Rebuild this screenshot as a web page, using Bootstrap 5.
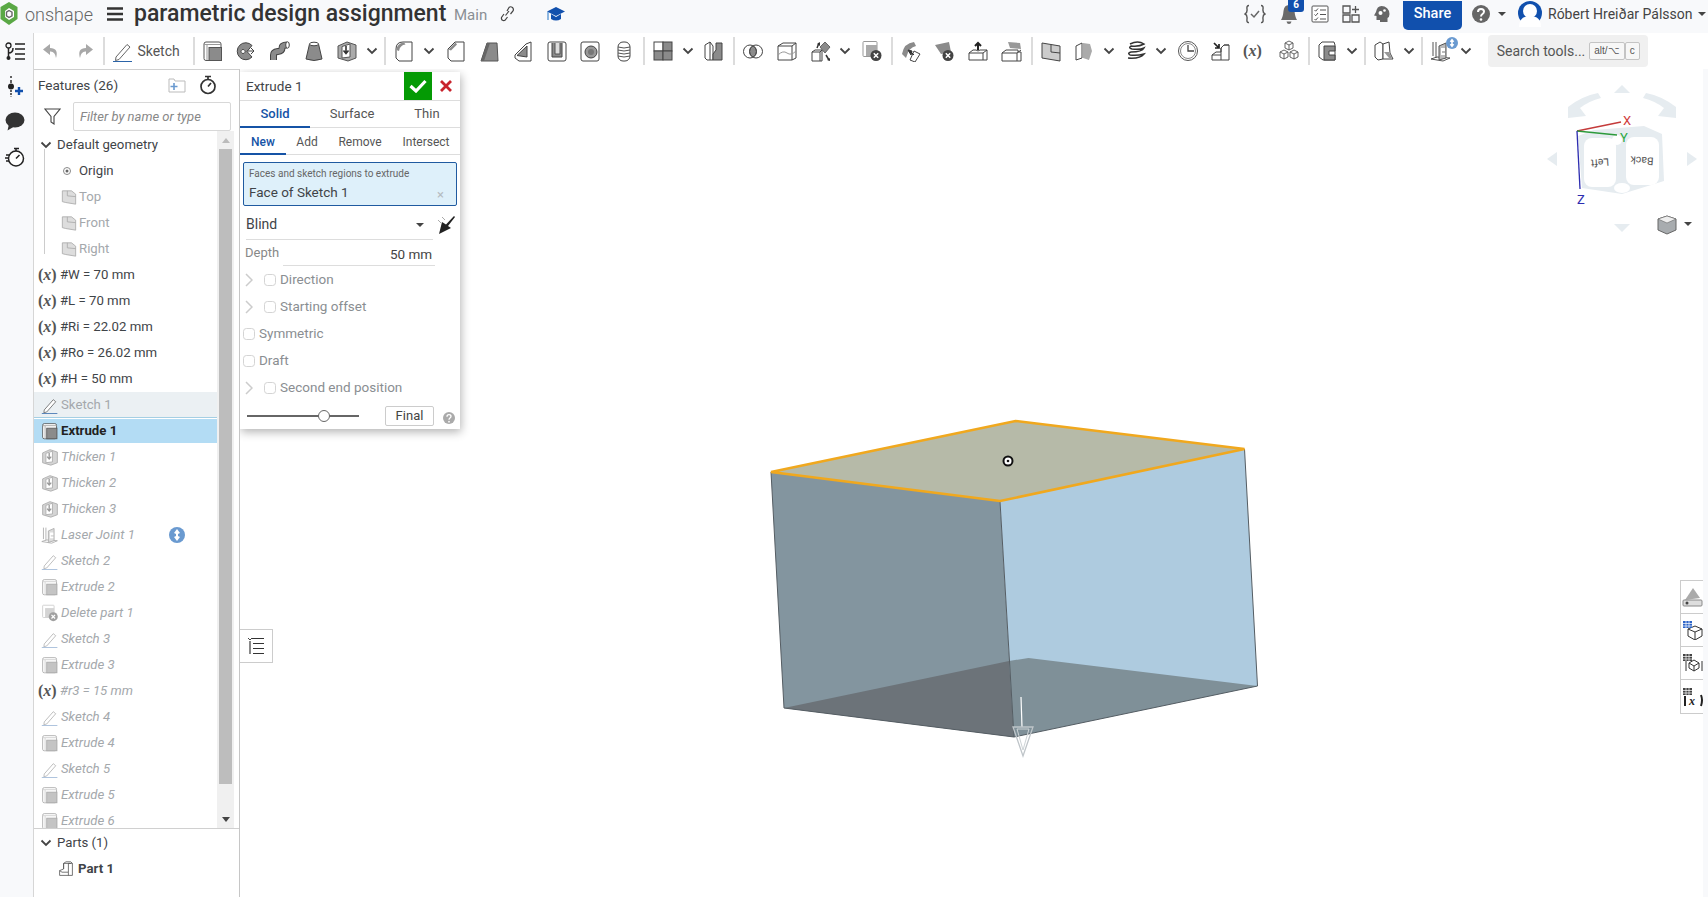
<!DOCTYPE html>
<html lang="en">
<head>
<meta charset="UTF-8" />
<meta name="viewport" content="width=device-width, initial-scale=1.0"/>
<title>parametric design assignment</title>
<link href="https://cdn.jsdelivr.net/npm/bootstrap@5.3.3/dist/css/bootstrap.min.css" rel="stylesheet"/>
<style>
  html, body { height: 100%; overflow: hidden; }
  body { font-family: Roboto, "Liberation Sans", sans-serif; font-size: 13.5px; color: #3f4448; background: #fff; }
  svg { display: block; flex: none; }

  /* top bar */
  .topbar { height: 33px; background: #f8f9fb; flex: none; padding-bottom: 5px; }
  .brand-name { font-size: 18px; font-weight: 300; color: #666; margin-left: 6px; width: 74px; }
  .doc-title { font-size: 23px; font-weight: 500; color: #333; margin-left: 11px; width: 320px; white-space: nowrap; }
  .doc-branch { font-size: 15px; color: #8a8f94; width: 45px; padding-top: 3px; }
  .link-cap { margin-left: 32px; }
  .top-right { margin-left: auto; }
  .top-gap { margin-left: 12px; }
  .top-gap-wide { margin-left: 13px; }
  .help-gap { margin-left: 10px; }
  .share-btn { background: #1150ad; border: 0; color: #fff; font-size: 14.5px; font-weight: 500; width: 59px; height: 29px; padding: 0 0 3px; margin: 0 0 -5px 13px; align-self: flex-start; border-radius: 0 0 5px 5px; }
  .share-btn:hover { background: #1150ad; color: #fff; }
  .notif { position: relative; margin-left: 14px; }
  .notif-count { position: absolute; left: 8px; top: -7px; width: 16px; height: 15px; background: #1150ad; color: #fff; font-size: 10px; font-weight: 700; line-height: 15px; text-align: center; border-radius: 3px; padding: 0; }
  .user-name { font-size: 14px; color: #444; margin-left: 6px; width: 150px; white-space: nowrap; }
  .mini-caret { width: 0; height: 0; border-left: 4px solid transparent; border-right: 4px solid transparent; border-top: 4px solid #444; }
  .end-caret { margin-right: 2px; }

  /* left rail */
  .rail { width: 34px; flex: none; background: #f8f9fb; border-right: 1px solid #d6d6d6; padding: 1px 4px 0 0; }
  .rail-btn { height: 35px; }

  /* toolbar */
  .toolbar { height: 36px; flex: none; background: #fff; }
  .tb-btn { width: 33.7px; height: 36px; flex: none; }
  .tb-chev { width: 16px; margin-right: 2px; }
  .tb-sep { width: 2px; height: 28px; background: #dcdcdc; margin: 0 1px 0 2px; flex: none; }
  .tb-sketch { padding-left: 6px; padding-right: 11px; height: 36px; font-size: 14px; color: #555; }
  .tb-sketch span { margin-left: 3px; }
  .tb-var { font-size: 19px; width: auto; margin: 0; }
  .tool-search { margin-left: 12px; width: 160px; height: 32px; background: #f0f0f0; border-radius: 4px; padding-left: 9px; font-size: 14px; color: #555; white-space: nowrap; flex: none; }
  .tool-key { font-family: "Liberation Sans", sans-serif; font-size: 10px; border: 1px solid #c4c4c4; background: #f7f7f7; color: #555; height: 18px; line-height: 16px; padding: 0 4px; border-radius: 2px; }
  .tool-key-a { margin-left: 4px; }

  /* features panel */
  .features { width: 206px; flex: none; border-top: 1px solid #d0d0d0; border-right: 1px solid #c6c6c6; }
  .feat-head { height: 32px; padding: 0 0 2px 4px; font-size: 13.5px; flex: none; }
  .feat-folder { margin-left: 50px; }
  .feat-timer { margin-left: 13px; }
  .feat-filter { height: 29px; padding-left: 10px; flex: none; }
  .feat-input { margin-left: 12px; width: 158px; height: 29px; padding: 0 6px; font-size: 13px; font-style: italic; border-radius: 2px; border-color: #d8d8d8; }
  .feat-input::placeholder { color: #888; }
  .tree-wrap { height: 698px; flex: none; padding-right: 5px; border-bottom: 1px solid #d0d0d0; }
  .tree-list { overflow: hidden; flex-grow: 1; padding-top: 1px; }
  .tree-row { height: 26px; flex: none; padding-left: 6px; white-space: nowrap; font-size: 13.2px; }
  .tree-row .row-ico { width: 20px; margin-right: 1px; }
  .tree-chev { margin-right: 5px; }
  .tree-off { color: #a4a8ac; font-style: italic; }
  .tree-dim { color: #a4a8ac; }
  .tree-sel { background: #b3dcf4; color: #222; font-weight: 700; height: 24px; margin-bottom: 1px; margin-top: 1px; }
  .tree-prev { background: #ebf0f3; border-bottom: 1px solid #a5cfe3; padding-top: 1px; }
  .var-ico { font-family: "Liberation Serif", serif; font-weight: 700; font-size: 16px; color: #555; width: 20px; margin-right: 2px; margin-left: -2px; white-space: nowrap; font-style: normal; }
  .var-ico i { font-style: italic; }
  .tree-nested { padding-left: 25px; position: relative; }
  .tree-nested::before { content: ""; position: absolute; left: 10px; top: -9px; height: 105px; width: 1px; background: #ccc; }
  .tree-nested .row-ico { margin-right: 0; }
  .parts-head { margin-top: 1px; }
  .part-row { padding-left: 24px; }
  .part-row svg { margin-right: 4px; }
  .scroll-bar { width: 17px; flex: none; background: #f0f0f0; }
  .scroll-up { height: 18px; }
  .scroll-thumb { height: 635px; margin: 0 2px; background: #bdbdbd; flex: none; }
  .scroll-down { margin-top: auto; height: 18px; }
  .arrow-up { width: 0; height: 0; border-left: 4px solid transparent; border-right: 4px solid transparent; border-bottom: 5px solid #bbb; }
  .arrow-down { width: 0; height: 0; border-left: 4px solid transparent; border-right: 4px solid transparent; border-top: 5px solid #444; }
  .info-dot { margin-left: 34px; }

  /* canvas and things floating on it */
  .viewport { position: relative; flex-grow: 1; border-right: 5px solid #f8f9fb; overflow: hidden; }
  .scene { position: absolute; inset: 0; width: 100%; height: 100%; }
  .cube-label { font-family: Roboto, sans-serif; font-size: 10.5px; fill: #555; }
  .axis-label { font-family: Roboto, sans-serif; font-size: 13px; }

  .dialog { position: absolute; left: 0; top: 3px; width: 220px; height: 357px; border: 0; border-radius: 0; box-shadow: 1px 3px 9px rgba(0,0,0,.3); }
  .dlg-head { height: 29px; border-bottom: 1px solid #ddd; padding-left: 6px; font-size: 13.5px; flex: none; }
  .dlg-ok { width: 28px; height: 28px; background: #049a04; margin-left: auto; }
  .dlg-close { width: 28px; height: 28px; }
  .dlg-tabs { height: 27px; border-bottom: 1px solid #ddd; flex: none; }
  .dlg-tab { text-align: center; padding-top: 3px; font-size: 13px; color: #555; height: 27px; margin-bottom: -1px; }
  .dlg-tab.on { color: #1553a6; font-weight: 500; border-bottom: 2px solid #1553a6; }
  .dlg-mode { font-size: 12px; padding-top: 5px; }
  .dlg-w70 { width: 70px; } .dlg-w84 { width: 84px; } .dlg-w66 { width: 66px; }
  .dlg-new { width: 46px; } .dlg-add { width: 42px; } .dlg-rem { width: 64px; } .dlg-int { width: 68px; }
  .dlg-query { margin: 7px 3px 0; height: 44px; background: #def0fa; border: 1px solid #1f5aa0; border-radius: 2px; padding: 4px 5px 0; position: relative; flex: none; }
  .query-label { font-size: 10px; color: #666; line-height: 14px; }
  .query-value { font-size: 13.5px; line-height: 20px; margin-top: 1px; }
  .query-x { position: absolute; right: 12px; top: 22px; color: #b5bcc1; font-size: 13px; }
  .dlg-blind { height: 30px; margin-top: 4px; padding-left: 6px; font-size: 14px; flex: none; }
  .blind-field { width: 187px; height: 30px; border-bottom: 1px solid #ddd; padding-right: 9px; flex: none; }
  .dlg-depth { height: 26px; padding-left: 5px; color: #888; font-size: 13px; flex: none; }
  .depth-field { width: 152px; height: 26px; margin-left: 4px; border-bottom: 1px solid #ddd; text-align: right; padding-right: 3px; color: #444; font-size: 13.5px; padding-top: 4px; }
  .dlg-check { height: 27px; color: #8a8e92; padding-left: 5px; font-size: 13.5px; flex: none; }
  .dlg-plain { padding-left: 3px; }
  .dlg-check .form-check-input { width: 12px; height: 12px; margin: 0 4px 0 0; border-color: #d4d4d4; }
  .exp-arrow { margin-right: 11px; }
  .dlg-slider { height: 27px; padding-left: 7px; margin-top: 1px; flex: none; }
  .slider-track { position: relative; width: 112px; height: 2px; background: #666; flex: none; }
  .slider-knob { position: absolute; left: 71px; top: -5px; width: 12px; height: 12px; background: #fff; border: 1px solid #666; border-radius: 50%; }
  .final-btn { margin-left: 26px; width: 49px; height: 20px; padding: 0; line-height: 18px; font-size: 13px; color: #444; border: 1px solid #ccc; border-radius: 2px; background: #fff; }
  .help-dot { margin-left: 9px; margin-top: 5px; }

  .list-tab { position: absolute; left: -1px; top: 560px; width: 34px; height: 34px; background: #fff; border: 1px solid #ccc; border-left-color: #fff; }
  .side-tools { position: absolute; right: 0; top: 511px; width: 23px; background: #fff; border: 1px solid #ccc; border-right: 0; }
  .side-tool { height: 33px; border-bottom: 1px solid #ccc; padding-left: 1px; }
  .side-tool:last-child { border-bottom: 0; }
  .side-var { font-family: "Liberation Serif", serif; font-weight: 700; font-style: italic; font-size: 12px; fill: #222; }
</style>
</head>
<body>

<svg width="0" height="0" class="position-absolute">
  <defs>
    <symbol id="i-sketch" viewBox="0 0 22 22"><path d="M4 17 15 4.500l3 2.500L7 19.500 3.500 20.500z" fill="#fff" stroke="#666" stroke-width="1"/><path d="M1 21.500h19" stroke="#2c64a8" stroke-width="1"/></symbol>
    <symbol id="i-extrude" viewBox="0 0 22 22"><rect x="2" y="2" width="17" height="18.500" rx="2" fill="#fff" stroke="#555"/><path d="M2 4.500h17M5 5v15" stroke="#999" fill="none"/><rect x="7" y="7.500" width="12.500" height="13" fill="#8b8b8b" stroke="#555"/></symbol>
    <symbol id="i-revolve" viewBox="0 0 22 22"><path d="M17 5.500A8.500 8.500 0 1 0 17 17l-5-5.500z" fill="#8b8b8b" stroke="#444"/><path d="M8 9.500a2 2 0 1 0 .1 0M12 11h7M16 8l3 3-3 3" fill="#fff" stroke="#444"/></symbol>
    <symbol id="i-sweep" viewBox="0 0 22 22"><path d="M4.500 20V15C4.500 9 13 14 13 8 13 5.500 15 5 18 5" fill="none" stroke="#444" stroke-width="7"/><path d="M4.500 20V15C4.500 9 13 14 13 8 13 5.500 15 5 18 5" fill="none" stroke="#8b8b8b" stroke-width="5"/><ellipse cx="18.500" cy="5" rx="1.800" ry="3.200" fill="#fff" stroke="#444"/></symbol>
    <symbol id="i-loft" viewBox="0 0 22 22"><path d="M6.500 4 3 19q8 3 16 0L15.500 4z" fill="#8b8b8b" stroke="#444"/><ellipse cx="11" cy="4" rx="4.500" ry="1.800" fill="#fff" stroke="#444"/></symbol>
    <symbol id="i-thicken" viewBox="0 0 22 22"><path d="M2 6 11 2l9 3v13l-8 3-10-3z" fill="#aaa" stroke="#555"/><path d="M6 6.500 14 4v13l-8 1z" fill="#fff" stroke="#555"/><path d="M10 6v7M7.500 10.500 10 13.500l2.500-3" fill="none" stroke="#333" stroke-width="1.600"/></symbol>
    <symbol id="i-fillet" viewBox="0 0 22 22"><path d="M3 9Q3 2 10 2h9v19H6l-3-3z" fill="#fff" stroke="#444"/><path d="M3.500 10Q4 3 11 2.500l1.500 2Q7 5 6 11z" fill="#8b8b8b"/></symbol>
    <symbol id="i-chamfer" viewBox="0 0 22 22"><path d="M3 9l7-7h9v19H6l-3-3z" fill="#fff" stroke="#444"/><path d="M3.500 9.500l7-7 1.500 2-6 6z" fill="#8b8b8b"/></symbol>
    <symbol id="i-draft" viewBox="0 0 22 22"><path d="M9 3h10l1 18H3z" fill="#8b8b8b" stroke="#555"/><path d="M9 3h3L6 21H3z" fill="#666"/></symbol>
    <symbol id="i-rib" viewBox="0 0 22 22"><path d="M3 15 14 4l5-2v19H7l-4-3z" fill="#fff" stroke="#444"/><path d="M5 15.500 15 6v11z" fill="#8b8b8b" stroke="#444"/></symbol>
    <symbol id="i-shell" viewBox="0 0 22 22"><rect x="2" y="2" width="18" height="19" rx="2" fill="#fff" stroke="#444"/><path d="M6 3v14h10V3" fill="#8b8b8b" stroke="#444"/><path d="M9 3v11h5V3" fill="#ddd" stroke="#555"/></symbol>
    <symbol id="i-hole" viewBox="0 0 22 22"><rect x="2" y="2" width="18" height="19" rx="2" fill="#fff" stroke="#444"/><circle cx="12" cy="12" r="6" fill="#999" stroke="#444"/><circle cx="12" cy="12" r="3" fill="#777"/></symbol>
    <symbol id="i-thread" viewBox="0 0 22 22"><rect x="5" y="2" width="12" height="19" rx="5" fill="#fff" stroke="#444"/><path d="M5 7q6 2 12 0M5 10q6 2 12 0M5 13q6 2 12 0M5 16q6 2 12 0" fill="none" stroke="#555"/></symbol>
    <symbol id="i-grid" viewBox="0 0 22 22"><rect x="2" y="2" width="9" height="9" fill="#fff" stroke="#444"/><rect x="11" y="2" width="9" height="9" fill="#8b8b8b" stroke="#444"/><rect x="2" y="11" width="9" height="9" fill="#8b8b8b" stroke="#444"/><rect x="11" y="11" width="9" height="9" fill="#8b8b8b" stroke="#444"/></symbol>
    <symbol id="i-wrap" viewBox="0 0 22 22"><path d="M2 5l5-3 3 4v14H4L2 18z" fill="#fff" stroke="#444"/><path d="M7 2v18M10 14l3-4V3h6v17H10z" fill="#8b8b8b" stroke="#444"/></symbol>
    <symbol id="i-bool" viewBox="0 0 22 22"><circle cx="8" cy="11.500" r="6.500" fill="#fff" stroke="#444"/><circle cx="14" cy="11.500" r="6.500" fill="none" stroke="#444"/><path d="M11 5.800a6.500 6.500 0 0 1 0 11.400 6.500 6.500 0 0 1 0-11.400z" fill="#8b8b8b" stroke="#444"/></symbol>
    <symbol id="i-splitbox" viewBox="0 0 22 22"><path d="M2 6l5-3h13v15l-4 2H2z" fill="#fff" stroke="#444"/><path d="M2 6h14v14M16 6l4-3" fill="none" stroke="#444"/><path d="M2 15q5-5 9-2t9-2" fill="none" stroke="#999"/></symbol>
    <symbol id="i-transform" viewBox="0 0 22 22"><path d="M15 2l5 5-5 6-5-6z" fill="#8b8b8b" stroke="#666"/><path d="M2 12l3-2h7v11H2zM2 12h8v9M10 12l2-2" fill="#fff" stroke="#444"/><path d="M7 8l2-5M16 15l3 5" stroke="#333" stroke-width="1.500"/><path d="M7 4l3-2v4zM20 21l-3-1 3-2z" fill="#333"/></symbol>
    <symbol id="i-deletepart" viewBox="0 0 22 22"><rect x="2" y="1.500" width="14" height="15" rx="1" fill="#fff" stroke="#999"/><rect x="5" y="5" width="11" height="11" fill="#aaa"/><circle cx="15" cy="15.500" r="5.500" fill="#444"/><path d="M12.800 13.300l4.400 4.400M17.200 13.300l-4.400 4.400" stroke="#fff" stroke-width="1.500"/></symbol>
    <symbol id="i-moveface" viewBox="0 0 22 22"><path d="M2 14Q4 3 14 2l2 4Q9 7 6 18z" fill="#8b8b8b"/><path d="M10 20l4-9 6 3-5 8z" fill="#fff" stroke="#444"/><path d="M8 10l4 1-1 4zM11 12l3 3" fill="#333" stroke="#333"/></symbol>
    <symbol id="i-delface" viewBox="0 0 22 22"><path d="M1 5l14-3 2 10-10 2z" fill="#8b8b8b"/><circle cx="14" cy="15.500" r="5.500" fill="#444"/><path d="M11.800 13.300l4.400 4.400M16.200 13.300l-4.400 4.400" stroke="#fff" stroke-width="1.500"/></symbol>
    <symbol id="i-replace" viewBox="0 0 22 22"><path d="M2 13l4-3h3q2 2 4 0h7v10H2zM2 13h14v7M16 13l4-3" fill="#fff" stroke="#444"/><path d="M11 10V3M8 6l3-3 3 3" fill="none" stroke="#222" stroke-width="2"/></symbol>
    <symbol id="i-offset" viewBox="0 0 22 22"><path d="M7 2l12 1 1 6-11-1z" fill="#999"/><path d="M1 13l4-3h12v2l3 0v9H1zM1 13h15v8M16 13l4-3" fill="#fff" stroke="#444"/></symbol>
    <symbol id="i-plane" viewBox="0 0 22 22"><path d="M2 3l18 3v15L2 18z" fill="#ccc" stroke="#444"/><path d="M11 4.500V12l9 1" fill="none" stroke="#444"/></symbol>
    <symbol id="i-mate" viewBox="0 0 22 22"><path d="M3 6l6-3v15l-6 2z" fill="#fff" stroke="#444"/><path d="M10 3l7 1 2 7-3 9-6-2z" fill="#aaa"/></symbol>
    <symbol id="i-helix" viewBox="0 0 22 22"><path d="M5 4q8-4 14 0-5 3-13 2-3 2 1 3 8 1 12-1-2 4-13 4-4 1-1 3 7 1 14-1-4 5-16 4" fill="none" stroke="#333" stroke-width="1.500"/></symbol>
    <symbol id="i-clock" viewBox="0 0 22 22"><circle cx="11" cy="11" r="9.500" fill="#fff" stroke="#555"/><circle cx="11" cy="11" r="7.500" fill="none" stroke="#888"/><path d="M11 5v6h6" fill="none" stroke="#444" stroke-width="1.300"/></symbol>
    <symbol id="i-steps" viewBox="0 0 22 22"><path d="M2 15l4-3h5V8l3-3h5v15H2zM2 15h9V8M11 15v5M14 5l5 0" fill="#fff" stroke="#444"/><path d="M4 3l5 5M9 4v4H5" fill="none" stroke="#222" stroke-width="1.700"/></symbol>
    <symbol id="i-cubes" viewBox="0 0 22 22"><g fill="#fff" stroke="#555" stroke-width=".9"><path d="M11 1l4 2v5l-4 2-4-2V3z"/><path d="M7 3l4 2 4-2M11 5v5"/><path d="M6 10l4 2v5l-4 2-4-2v-5z"/><path d="M2 12l4 2 4-2M6 14v5"/><path d="M16 10l4 2v5l-4 2-4-2v-5z"/><path d="M12 12l4 2 4-2M16 14v5"/></g></symbol>
    <symbol id="i-sheet" viewBox="0 0 22 22"><path d="M3 5l3-3h12l1 3v15H7l-4-3z" fill="#fff" stroke="#444"/><path d="M8 6h11v5h-6v4h6v5H8z" fill="#8b8b8b" stroke="#444"/></symbol>
    <symbol id="i-book" viewBox="0 0 22 22"><path d="M2 5l5-3 3 2v15l-5 1-3-3z" fill="#fff" stroke="#444"/><path d="M10 4l6-2 1 11 3 6H10z" fill="#fff" stroke="#444"/><path d="M11 12l5 6h3l-3-6z" fill="#999"/></symbol>
    <symbol id="i-laser" viewBox="0 0 22 22"><path d="M6 2v16M3 2v14M1 19l6-2 13 1-7 3z" fill="none" stroke="#555"/><path d="M9 6l7-3v15l-7 2z" fill="#bbb" stroke="#555"/><path d="M11 8h4v3h-3v2h3v2h-4z" fill="#fff"/></symbol>
    <symbol id="i-planeref" viewBox="0 0 18 18"><path d="M1 1h11l5 4v12L5 15 1 14z" fill="#ddd" stroke="#aaa"/><path d="M7 1v6l10 1" fill="none" stroke="#aaa"/></symbol>
    <symbol id="i-part" viewBox="0 0 20 20"><path d="M7 3l3-2h6l2 2v15H2v-6l5-2zM2 12l3 2h8v4M13 14V3h5M7 10V3h9" fill="#fff" stroke="#555"/></symbol>
    <symbol id="i-chev" viewBox="0 0 12 8"><path d="M1.500 1.500 6 6l4.500-4.500" fill="none" stroke="#444" stroke-width="1.800"/></symbol>
    <symbol id="i-info" viewBox="0 0 16 16"><circle cx="8" cy="8" r="8" fill="#6a9ad0"/><path d="M8 2l3 4-2 1v2l2 1-3 4-3-4 2-1V7L5 6z" fill="#fff"/></symbol>
  </defs>
</svg>

<div class="d-flex flex-column vh-100">

  <!-- top bar -->
  <header class="topbar d-flex align-items-center">
    <svg width="19" height="28" viewBox="0 0 19 28"><path d="M9 2l8.500 5v12L9 25 .5 19V7z" fill="#5aa845"/><path d="M9 8l5 3v6l-5 3-4-3v-6z" fill="#fff"/><path d="M9 10.500l3 1.700v3.600L9 17.500l-2.500-1.700v-3.600z" fill="none" stroke="#666" stroke-width="1.400"/></svg>
    <span class="brand-name">onshape</span>
    <svg width="16" height="14" viewBox="0 0 16 14" class="ms-2"><path d="M0 1.500h16M0 7h16M0 12.500h16" stroke="#333" stroke-width="2.400"/></svg>
    <span class="doc-title">parametric design assignment</span>
    <span class="doc-branch">Main</span>
    <svg width="16" height="16" viewBox="0 0 16 16"><path d="M6.500 9.500 10 5M5 8 2.500 11.500Q2 14 4 14.500 6 15 7 13l1.500-2M8 5l2-3.500Q11.500 0 13.500 1.500 15 3 14 5l-2.500 3" fill="none" stroke="#444" stroke-width="1.200"/></svg>
    <svg width="18" height="17" viewBox="0 0 18 17" class="link-cap"><path d="M9 1l9 4.500L9 10 0 5.500z" fill="#1150ad"/><path d="M4 8v5q5 3 10 0V8l-5 3z" fill="#1150ad"/><path d="M1 6v8" stroke="#6aa0d8" stroke-width="1.500"/></svg>

    <div class="top-right d-flex align-items-center">
      <svg width="22" height="20" viewBox="0 0 22 20"><path d="M5 1.500Q2.500 1.500 3 5t-2 5q2.500 1 2 5t2 3.500M17 1.500q2.500 0 2 3.500t2 5q-2.500 1-2 5t-2 3.500" fill="none" stroke="#555" stroke-width="1.400"/><path d="M7 10l3 3 5-6" fill="none" stroke="#666" stroke-width="1.500"/></svg>
      <div class="notif">
        <svg width="18" height="20" viewBox="0 0 18 20"><path d="M9 1q5 0 5.500 6t2.500 9H1q2-3 2.500-9T9 1zM6.500 17.500h5Q11 20 9 20t-2.500-2.500z" fill="#6a6a6a"/></svg>
        <span class="badge notif-count">6</span>
      </div>
      <svg width="18" height="18" viewBox="0 0 18 18" class="top-gap-wide"><rect x="1" y="1" width="16" height="16" rx="1" fill="#fff" stroke="#555"/><path d="M3.500 5l1.200 1.200L7 3.500M3.500 9.500l1.200 1.200L7 8M3.500 14l1.200 1.200L7 12.500M9 5h6M9 9.500h6M9 14h6" fill="none" stroke="#555"/></svg>
      <svg width="18" height="18" viewBox="0 0 18 18" class="top-gap-wide"><path d="M1 1h7v7H1zM1 10h7v7H1zM10 10h7v7h-7zM13.500 1v7M10 4.500h7" fill="none" stroke="#555" stroke-width="1.300"/></svg>
      <svg width="17" height="17" viewBox="0 0 17 17" class="top-gap-wide"><path d="M8.500 0a8 8 0 0 1 8 8q0 3-2 4v4H7v-2H3.500V10L1 9.500 3 6Q4 0 8.500 0z" fill="#666"/><circle cx="7.500" cy="7" r="2" fill="#fff"/><circle cx="11.500" cy="4.500" r="1.300" fill="#fff"/></svg>
      <button type="button" class="btn share-btn">Share</button>
      <svg width="18" height="18" viewBox="0 0 18 18" class="help-gap"><circle cx="9" cy="9" r="9" fill="#666"/><path d="M6 7q0-3 3-3t3 2.500Q12 8 10.500 9 9 10 9 11.500" fill="none" stroke="#fff" stroke-width="2"/><circle cx="9" cy="14.500" r="1.300" fill="#fff"/></svg>
      <span class="mini-caret ms-2"></span>
      <svg width="24" height="26" viewBox="0 0 24 26" class="top-gap"><circle cx="12" cy="12" r="12" fill="#1150ad"/><circle cx="12" cy="10" r="7" fill="#fff"/><path d="M1 26q0-11 11-11t11 11z" fill="#fff"/></svg>
      <span class="user-name">Róbert Hreiðar Pálsson</span>
      <span class="mini-caret end-caret"></span>
    </div>
  </header>

  <div class="d-flex flex-grow-1 overflow-hidden">

    <!-- icon rail -->
    <aside class="rail d-flex flex-column align-items-center">
      <div class="rail-btn d-flex align-items-center">
        <svg width="20" height="20" viewBox="0 0 20 20"><circle cx="3.500" cy="3.500" r="2.500" fill="none" stroke="#222" stroke-width="1.300"/><path d="M3.500 6v9M3.500 11Q8 11 8 6" fill="none" stroke="#222" stroke-width="1.500"/><circle cx="3.500" cy="16" r="2" fill="#222"/><path d="M10 2h10M10 7h10M10 12h10M10 17h10" stroke="#222" stroke-width="1.700"/></svg>
      </div>
      <div class="rail-btn d-flex align-items-center">
        <svg width="18" height="22" viewBox="0 0 18 22"><path d="M5 0v3M5 17v4" stroke="#222" stroke-width="1.400" stroke-dasharray="2 1.500"/><path d="M5 4v3M5 14v2" stroke="#222" stroke-width="1.400"/><circle cx="5" cy="10.500" r="3" fill="#222"/><path d="M13 11v8M9 15h8" stroke="#1150ad" stroke-width="2.400"/></svg>
      </div>
      <div class="rail-btn d-flex align-items-center">
        <svg width="20" height="19" viewBox="0 0 20 19"><ellipse cx="10" cy="8" rx="9.500" ry="7.500" fill="#333"/><path d="M4 12 2.500 18.500 10 14z" fill="#333"/></svg>
      </div>
      <div class="rail-btn d-flex align-items-center">
        <svg width="20" height="20" viewBox="0 0 20 20"><circle cx="11" cy="11.500" r="7.500" fill="#fff" stroke="#222" stroke-width="1.500"/><path d="M11 11.500l3.500-3.500M9 1.500h5M11 2v2M1 8h4M0 11h3M1 14h3" stroke="#222" stroke-width="1.500"/></svg>
      </div>
    </aside>

    <div class="d-flex flex-column flex-grow-1 overflow-hidden">

      <!-- toolbar -->
      <nav class="toolbar d-flex align-items-center">
        <div class="tb-btn d-flex align-items-center justify-content-center"><svg width="16" height="14" viewBox="0 0 16 14"><path d="M7 0 0 5.500 7 11V7.500q5-.5 6 6.500 3-10-6-10z" fill="#a8a8a8"/></svg></div>
        <div class="tb-btn d-flex align-items-center justify-content-center"><svg width="16" height="14" viewBox="0 0 16 14"><path d="M9 0l7 5.500L9 11V7.500Q4 7 3 14 0 4 9 4z" fill="#a8a8a8"/></svg></div>
        <span class="tb-sep"></span>
        <div class="tb-sketch d-flex align-items-center"><svg width="22" height="22"><use href="#i-sketch"/></svg><span>Sketch</span></div>
        <span class="tb-sep"></span>
        <div class="tb-btn d-flex align-items-center justify-content-center"><svg width="22" height="22"><use href="#i-extrude"/></svg></div>
        <div class="tb-btn d-flex align-items-center justify-content-center"><svg width="22" height="22"><use href="#i-revolve"/></svg></div>
        <div class="tb-btn d-flex align-items-center justify-content-center"><svg width="22" height="22"><use href="#i-sweep"/></svg></div>
        <div class="tb-btn d-flex align-items-center justify-content-center"><svg width="22" height="22"><use href="#i-loft"/></svg></div>
        <div class="tb-btn d-flex align-items-center justify-content-center"><svg width="22" height="22"><use href="#i-thicken"/></svg></div>
        <svg class="tb-chev" height="8"><use href="#i-chev"/></svg>
        <span class="tb-sep"></span>
        <div class="tb-btn d-flex align-items-center justify-content-center"><svg width="22" height="22"><use href="#i-fillet"/></svg></div>
        <svg class="tb-chev" height="8"><use href="#i-chev"/></svg>
        <div class="tb-btn d-flex align-items-center justify-content-center"><svg width="22" height="22"><use href="#i-chamfer"/></svg></div>
        <div class="tb-btn d-flex align-items-center justify-content-center"><svg width="22" height="22"><use href="#i-draft"/></svg></div>
        <div class="tb-btn d-flex align-items-center justify-content-center"><svg width="22" height="22"><use href="#i-rib"/></svg></div>
        <div class="tb-btn d-flex align-items-center justify-content-center"><svg width="22" height="22"><use href="#i-shell"/></svg></div>
        <div class="tb-btn d-flex align-items-center justify-content-center"><svg width="22" height="22"><use href="#i-hole"/></svg></div>
        <div class="tb-btn d-flex align-items-center justify-content-center"><svg width="22" height="22"><use href="#i-thread"/></svg></div>
        <span class="tb-sep"></span>
        <div class="tb-btn d-flex align-items-center justify-content-center"><svg width="22" height="22"><use href="#i-grid"/></svg></div>
        <svg class="tb-chev" height="8"><use href="#i-chev"/></svg>
        <div class="tb-btn d-flex align-items-center justify-content-center"><svg width="22" height="22"><use href="#i-wrap"/></svg></div>
        <span class="tb-sep"></span>
        <div class="tb-btn d-flex align-items-center justify-content-center"><svg width="22" height="22"><use href="#i-bool"/></svg></div>
        <div class="tb-btn d-flex align-items-center justify-content-center"><svg width="22" height="22"><use href="#i-splitbox"/></svg></div>
        <div class="tb-btn d-flex align-items-center justify-content-center"><svg width="22" height="22"><use href="#i-transform"/></svg></div>
        <svg class="tb-chev" height="8"><use href="#i-chev"/></svg>
        <div class="tb-btn d-flex align-items-center justify-content-center"><svg width="22" height="22"><use href="#i-deletepart"/></svg></div>
        <span class="tb-sep"></span>
        <div class="tb-btn d-flex align-items-center justify-content-center"><svg width="22" height="22"><use href="#i-moveface"/></svg></div>
        <div class="tb-btn d-flex align-items-center justify-content-center"><svg width="22" height="22"><use href="#i-delface"/></svg></div>
        <div class="tb-btn d-flex align-items-center justify-content-center"><svg width="22" height="22"><use href="#i-replace"/></svg></div>
        <div class="tb-btn d-flex align-items-center justify-content-center"><svg width="22" height="22"><use href="#i-offset"/></svg></div>
        <span class="tb-sep"></span>
        <div class="tb-btn d-flex align-items-center justify-content-center"><svg width="22" height="22"><use href="#i-plane"/></svg></div>
        <div class="tb-btn d-flex align-items-center justify-content-center"><svg width="22" height="22"><use href="#i-mate"/></svg></div>
        <svg class="tb-chev" height="8"><use href="#i-chev"/></svg>
        <div class="tb-btn d-flex align-items-center justify-content-center"><svg width="22" height="22"><use href="#i-helix"/></svg></div>
        <svg class="tb-chev" height="8"><use href="#i-chev"/></svg>
        <div class="tb-btn d-flex align-items-center justify-content-center"><svg width="22" height="22"><use href="#i-clock"/></svg></div>
        <div class="tb-btn d-flex align-items-center justify-content-center"><svg width="22" height="22"><use href="#i-steps"/></svg></div>
        <div class="tb-btn d-flex align-items-center justify-content-center"><span class="var-ico tb-var">(<i>x</i>)</span></div>
        <div class="tb-btn d-flex align-items-center justify-content-center"><svg width="22" height="22"><use href="#i-cubes"/></svg></div>
        <span class="tb-sep"></span>
        <div class="tb-btn d-flex align-items-center justify-content-center"><svg width="22" height="22"><use href="#i-sheet"/></svg></div>
        <svg class="tb-chev" height="8"><use href="#i-chev"/></svg>
        <span class="tb-sep"></span>
        <div class="tb-btn d-flex align-items-center justify-content-center"><svg width="22" height="22"><use href="#i-book"/></svg></div>
        <svg class="tb-chev" height="8"><use href="#i-chev"/></svg>
        <span class="tb-sep"></span>
        <div class="tb-btn d-flex align-items-center justify-content-center position-relative"><svg width="22" height="22"><use href="#i-laser"/></svg><svg width="12" height="12" class="position-absolute top-0 end-0 mt-1"><use href="#i-info"/></svg></div>
        <svg class="tb-chev" height="8"><use href="#i-chev"/></svg>
        <div class="tool-search d-flex align-items-center">Search tools...<span class="tool-key tool-key-a">alt/⌥</span><span class="tool-key">c</span></div>
      </nav>

      <div class="d-flex flex-grow-1 overflow-hidden">

        <!-- feature list -->
        <section class="features d-flex flex-column">
          <div class="feat-head d-flex align-items-center">
            <span>Features (26)</span>
            <svg width="18" height="15" viewBox="0 0 18 15" class="feat-folder"><path d="M1 1h5l1 2h10v11H1z" fill="#fff" stroke="#bbb"/><path d="M6 5v7M2.500 8.500h7" stroke="#6a9ad0" stroke-width="1.600"/></svg>
            <svg width="18" height="20" viewBox="0 0 18 20" class="feat-timer"><circle cx="9" cy="11.500" r="7" fill="#fff" stroke="#333" stroke-width="1.700"/><path d="M9 11.500l3-3.500M6 1.500h6M9 2v3" stroke="#333" stroke-width="1.700"/></svg>
          </div>
          <div class="feat-filter d-flex align-items-center">
            <svg width="17" height="17" viewBox="0 0 17 17"><path d="M1 1h15l-6 7.500V16l-3-2V8.500z" fill="#fff" stroke="#444" stroke-width="1.100"/></svg>
            <input type="text" class="form-control feat-input" placeholder="Filter by name or type"/>
          </div>

          <div class="tree-wrap d-flex">
            <div class="tree-list d-flex flex-column">
              <div class="tree-row d-flex align-items-center"><svg width="12" height="8" class="tree-chev"><use href="#i-chev"/></svg>Default geometry</div>
              <div class="tree-nested">
                <div class="tree-row d-flex align-items-center ps-0"><svg class="row-ico" height="8" viewBox="0 0 20 8"><circle cx="8" cy="4" r="3.500" fill="none" stroke="#888"/><circle cx="8" cy="4" r="1.500" fill="#666"/></svg>Origin</div>
                <div class="tree-row d-flex align-items-center ps-0 tree-dim"><svg class="row-ico" height="15" viewBox="0 0 20 18"><use href="#i-planeref"/></svg>Top</div>
                <div class="tree-row d-flex align-items-center ps-0 tree-dim"><svg class="row-ico" height="15" viewBox="0 0 20 18"><use href="#i-planeref"/></svg>Front</div>
                <div class="tree-row d-flex align-items-center ps-0 tree-dim"><svg class="row-ico" height="15" viewBox="0 0 20 18"><use href="#i-planeref"/></svg>Right</div>
              </div>
              <div class="tree-row d-flex align-items-center"><span class="var-ico">(<i>x</i>)</span>#W = 70 mm</div>
              <div class="tree-row d-flex align-items-center"><span class="var-ico">(<i>x</i>)</span>#L = 70 mm</div>
              <div class="tree-row d-flex align-items-center"><span class="var-ico">(<i>x</i>)</span>#Ri = 22.02 mm</div>
              <div class="tree-row d-flex align-items-center"><span class="var-ico">(<i>x</i>)</span>#Ro = 26.02 mm</div>
              <div class="tree-row d-flex align-items-center"><span class="var-ico">(<i>x</i>)</span>#H = 50 mm</div>
              <div class="tree-row tree-prev tree-dim d-flex align-items-center"><svg class="row-ico" width="20" height="18" viewBox="0 0 22 22"><use href="#i-sketch"/></svg>Sketch 1</div>
              <div class="tree-row tree-sel d-flex align-items-center"><svg class="row-ico" width="20" height="18" viewBox="0 0 22 22"><use href="#i-extrude"/></svg>Extrude 1</div>
              <div class="tree-row tree-off d-flex align-items-center"><svg class="row-ico opacity-50" width="20" height="18" viewBox="0 0 22 22"><use href="#i-thicken"/></svg>Thicken 1</div>
              <div class="tree-row tree-off d-flex align-items-center"><svg class="row-ico opacity-50" width="20" height="18" viewBox="0 0 22 22"><use href="#i-thicken"/></svg>Thicken 2</div>
              <div class="tree-row tree-off d-flex align-items-center"><svg class="row-ico opacity-50" width="20" height="18" viewBox="0 0 22 22"><use href="#i-thicken"/></svg>Thicken 3</div>
              <div class="tree-row tree-off d-flex align-items-center"><svg class="row-ico opacity-50" width="20" height="18" viewBox="0 0 22 22"><use href="#i-laser"/></svg>Laser Joint 1<svg class="info-dot" width="16" height="16"><use href="#i-info"/></svg></div>
              <div class="tree-row tree-off d-flex align-items-center"><svg class="row-ico opacity-50" width="20" height="18" viewBox="0 0 22 22"><use href="#i-sketch"/></svg>Sketch 2</div>
              <div class="tree-row tree-off d-flex align-items-center"><svg class="row-ico opacity-50" width="20" height="18" viewBox="0 0 22 22"><use href="#i-extrude"/></svg>Extrude 2</div>
              <div class="tree-row tree-off d-flex align-items-center"><svg class="row-ico opacity-50" width="20" height="18" viewBox="0 0 22 22"><use href="#i-deletepart"/></svg>Delete part 1</div>
              <div class="tree-row tree-off d-flex align-items-center"><svg class="row-ico opacity-50" width="20" height="18" viewBox="0 0 22 22"><use href="#i-sketch"/></svg>Sketch 3</div>
              <div class="tree-row tree-off d-flex align-items-center"><svg class="row-ico opacity-50" width="20" height="18" viewBox="0 0 22 22"><use href="#i-extrude"/></svg>Extrude 3</div>
              <div class="tree-row tree-off d-flex align-items-center"><span class="var-ico">(<i>x</i>)</span>#r3 = 15 mm</div>
              <div class="tree-row tree-off d-flex align-items-center"><svg class="row-ico opacity-50" width="20" height="18" viewBox="0 0 22 22"><use href="#i-sketch"/></svg>Sketch 4</div>
              <div class="tree-row tree-off d-flex align-items-center"><svg class="row-ico opacity-50" width="20" height="18" viewBox="0 0 22 22"><use href="#i-extrude"/></svg>Extrude 4</div>
              <div class="tree-row tree-off d-flex align-items-center"><svg class="row-ico opacity-50" width="20" height="18" viewBox="0 0 22 22"><use href="#i-sketch"/></svg>Sketch 5</div>
              <div class="tree-row tree-off d-flex align-items-center"><svg class="row-ico opacity-50" width="20" height="18" viewBox="0 0 22 22"><use href="#i-extrude"/></svg>Extrude 5</div>
              <div class="tree-row tree-off d-flex align-items-center"><svg class="row-ico opacity-50" width="20" height="18" viewBox="0 0 22 22"><use href="#i-extrude"/></svg>Extrude 6</div>
            </div>
            <div class="scroll-bar d-flex flex-column">
              <div class="scroll-up d-flex align-items-center justify-content-center"><span class="arrow-up"></span></div>
              <div class="scroll-thumb"></div>
              <div class="scroll-down d-flex align-items-center justify-content-center"><span class="arrow-down"></span></div>
            </div>
          </div>

          <div class="tree-row parts-head d-flex align-items-center"><svg width="12" height="8" class="tree-chev"><use href="#i-chev"/></svg>Parts (1)</div>
          <div class="tree-row part-row d-flex align-items-center fw-bold"><svg width="16" height="16" viewBox="0 0 20 20"><use href="#i-part"/></svg>Part 1</div>
        </section>

        <!-- graphics area -->
        <main class="viewport">
          <svg class="scene" viewBox="240 69 1463 828" preserveAspectRatio="xMinYMin meet">
            <!-- part -->
            <path d="M771 472 1000 501 1014 737 784 708z" fill="#83959f"/>
            <path d="M1000 501 1244.500 449 1257.500 686 1014 737z" fill="#aecbdf"/>
            <path d="M784 708 1009 661 1014 737z" fill="#6c7379"/>
            <path d="M1009 661 1028.500 658 1257.500 686 1014 737z" fill="#7f9098"/>
            <path d="M771 472 1015.500 421 1244.500 449 1000 501z" fill="#b6baa8"/>
            <path d="M1000 501 1014 737M771 472 784 708 1014 737 1257.500 686 1244.500 449" fill="none" stroke="#555d63" stroke-width="1"/>
            <path d="M771 472 1015.500 421 1244.500 449 1000 501z" fill="none" stroke="#f0a81e" stroke-width="2.500"/>
            <circle cx="1008" cy="461" r="4.500" fill="#fff" stroke="#111" stroke-width="2"/>
            <circle cx="1008" cy="461" r="1.300" fill="#111"/>
            <path d="M1021 697 1022 727" stroke="#fff" stroke-width="1.200"/>
            <path d="M1013 727 1033 727 1023 756z" fill="none" stroke="#bfc5c9" stroke-width="1.300"/>
            <path d="M1017 729 1029 729 1023 750z" fill="none" stroke="#cdd3d6" stroke-width="1"/>

            <!-- view cube -->
            <g fill="#e6ecf0">
              <path d="M1622 85l8 8h-16zM1622 232l-8-8h16zM1547 159l10-7v14zM1697 159l-10-7v14z"/>
              <path d="M1568 118V107q14-11 30-14l3 5q-12 3-21 10l6 8z"/>
              <path d="M1676 118v-11q-14-11-30-14l-3 5q12 3 21 10l-6 8z"/>
              <path d="M1578 136l16-6 50-4 18 8 2 47-42 13-40-6z"/>
            </g>
            <rect x="1584" y="138" width="32" height="49" rx="8" fill="#fff"/>
            <rect x="1626" y="137" width="33" height="48" rx="8" fill="#fff"/>
            <ellipse cx="1622" cy="188" rx="8" ry="5" fill="#fff"/>
            <circle cx="1617" cy="140" r="5" fill="#fff"/>
            <text class="cube-label" transform="rotate(176 1600 163)" x="1600" y="167" text-anchor="middle">Left</text>
            <text class="cube-label" transform="rotate(184 1642 161)" x="1642" y="165" text-anchor="middle">Back</text>
            <path d="M1577 131 1621 122" stroke="#c43a3a" stroke-width="1.300"/>
            <path d="M1577 131 1617 135" stroke="#2d9a3c" stroke-width="1.300"/>
            <path d="M1577 131 1580 189" stroke="#2d2db0" stroke-width="1.300"/>
            <text class="axis-label" x="1623" y="125" fill="#d13b3b">X</text>
            <text class="axis-label" x="1620" y="142" fill="#2aa83f">Y</text>
            <text class="axis-label" x="1577" y="204" fill="#2d2db0">Z</text>
            <path d="M1658 219l9-3 9 3v11l-9 4-9-4z" fill="#a8acaf" stroke="#666"/>
            <path d="M1658 219l9 4 9-4-9-3z" fill="#eee" stroke="#666" stroke-width=".6"/>
            <path d="M1684 222h8l-4 4z" fill="#444"/>
          </svg>

          <!-- extrude dialog -->
          <form class="card dialog">
            <div class="dlg-head d-flex align-items-center">
              <span>Extrude 1</span>
              <div class="dlg-ok d-flex align-items-center justify-content-center"><svg width="18" height="14" viewBox="0 0 18 14"><path d="M1.500 7 7 12 16.500 2" fill="none" stroke="#fff" stroke-width="3.200"/></svg></div>
              <div class="dlg-close d-flex align-items-center justify-content-center"><svg width="12" height="12" viewBox="0 0 12 12"><path d="M1 1l10 10M11 1 1 11" stroke="#c8232c" stroke-width="2.800"/></svg></div>
            </div>
            <div class="dlg-tabs d-flex">
              <div class="dlg-tab dlg-w70 on">Solid</div>
              <div class="dlg-tab dlg-w84">Surface</div>
              <div class="dlg-tab dlg-w66">Thin</div>
            </div>
            <div class="dlg-tabs d-flex">
              <div class="dlg-tab dlg-mode dlg-new on">New</div>
              <div class="dlg-tab dlg-mode dlg-add">Add</div>
              <div class="dlg-tab dlg-mode dlg-rem">Remove</div>
              <div class="dlg-tab dlg-mode dlg-int">Intersect</div>
            </div>
            <div class="dlg-query">
              <div class="query-label">Faces and sketch regions to extrude</div>
              <div class="query-value">Face of Sketch 1</div>
              <span class="query-x">×</span>
            </div>
            <div class="dlg-blind d-flex align-items-center">
              <div class="blind-field d-flex align-items-center justify-content-between"><span>Blind</span><span class="mini-caret"></span></div>
              <svg width="19" height="20" viewBox="0 0 19 20" class="ms-1"><path d="M2 19 5 7l4 2.500L17 1l1 1-7 9 3 2z" fill="#222"/><path d="M1 5l3 3M5 2l3 3" stroke="#aaa"/></svg>
            </div>
            <div class="dlg-depth d-flex align-items-center">Depth<div class="depth-field">50 mm</div></div>
            <div class="dlg-check d-flex align-items-center"><svg class="exp-arrow" width="8" height="14" viewBox="0 0 8 14"><path d="M1 1l6 6-6 6" fill="none" stroke="#ccc" stroke-width="1.500"/></svg><input class="form-check-input" type="checkbox"/>Direction</div>
            <div class="dlg-check d-flex align-items-center"><svg class="exp-arrow" width="8" height="14" viewBox="0 0 8 14"><path d="M1 1l6 6-6 6" fill="none" stroke="#ccc" stroke-width="1.500"/></svg><input class="form-check-input" type="checkbox"/>Starting offset</div>
            <div class="dlg-check dlg-plain d-flex align-items-center"><input class="form-check-input" type="checkbox"/>Symmetric</div>
            <div class="dlg-check dlg-plain d-flex align-items-center"><input class="form-check-input" type="checkbox"/>Draft</div>
            <div class="dlg-check d-flex align-items-center"><svg class="exp-arrow" width="8" height="14" viewBox="0 0 8 14"><path d="M1 1l6 6-6 6" fill="none" stroke="#ccc" stroke-width="1.500"/></svg><input class="form-check-input" type="checkbox"/>Second end position</div>
            <div class="dlg-slider d-flex align-items-center">
              <div class="slider-track"><span class="slider-knob"></span></div>
              <button type="button" class="btn final-btn">Final</button>
              <svg class="help-dot" width="12" height="12" viewBox="0 0 18 18"><circle cx="9" cy="9" r="9" fill="#aaa"/><path d="M6 7q0-3 3-3t3 2.500Q12 8 10.500 9 9 10 9 11.500" fill="none" stroke="#fff" stroke-width="2"/><circle cx="9" cy="14.500" r="1.300" fill="#fff"/></svg>
            </div>
          </form>

          <!-- collapsed list tab -->
          <div class="list-tab d-flex align-items-center justify-content-center">
            <svg width="18" height="18" viewBox="0 0 18 18"><path d="M1 1l2 2 2-2" fill="none" stroke="#444"/><path d="M3 4v13" stroke="#888" stroke-width="2"/><path d="M5 1.500h12M6 6.500h11M6 11.500h11M6 16.500h11" stroke="#333"/></svg>
          </div>

          <!-- right hand tools -->
          <div class="side-tools">
            <div class="side-tool d-flex align-items-center"><svg width="21" height="20" viewBox="0 0 21 20"><path d="M3 13 11 1l7 10z" fill="#aaa"/><rect x="1" y="13" width="19" height="6" rx="1" fill="#ddd" stroke="#888"/><circle cx="5" cy="16" r="1.500" fill="#444"/></svg></div>
            <div class="side-tool d-flex align-items-center"><svg width="21" height="20" viewBox="0 0 21 20"><path d="M6 9l7-3 7 3v7l-7 4-7-4zM6 9l7 3 7-3M13 12v8" fill="#fff" stroke="#333"/><path d="M1 1h9v7H1z" fill="#2c64c8"/><path d="M4 1v7M7 1v7M1 3.500h9M1 6h9" stroke="#fff" stroke-width=".7"/></svg></div>
            <div class="side-tool d-flex align-items-center"><svg width="21" height="20" viewBox="0 0 21 20"><path d="M7 10l5-3 5 3v5l-5 3-5-3zM7 10l5 3 5-3M12 13v5M4 8v10M20 8v10" fill="#fff" stroke="#333"/><path d="M1 1h9v7H1z" fill="#444"/><path d="M4 1v7M7 1v7M1 3.500h9M1 6h9" stroke="#fff" stroke-width=".7"/></svg></div>
            <div class="side-tool d-flex align-items-center"><svg width="21" height="20" viewBox="0 0 21 20"><path d="M1 1h9v7H1z" fill="#444"/><path d="M4 1v7M7 1v7M1 3.500h9M1 6h9" stroke="#fff" stroke-width=".7"/><path d="M3 9v10M19 8q2 5 0 11" fill="none" stroke="#222" stroke-width="2"/><text class="side-var" x="7" y="18">x</text></svg></div>
          </div>
        </main>
      </div>
    </div>
  </div>
</div>

<script src="https://cdn.jsdelivr.net/npm/bootstrap@5.3.3/dist/js/bootstrap.bundle.min.js"></script>
</body>
</html>
